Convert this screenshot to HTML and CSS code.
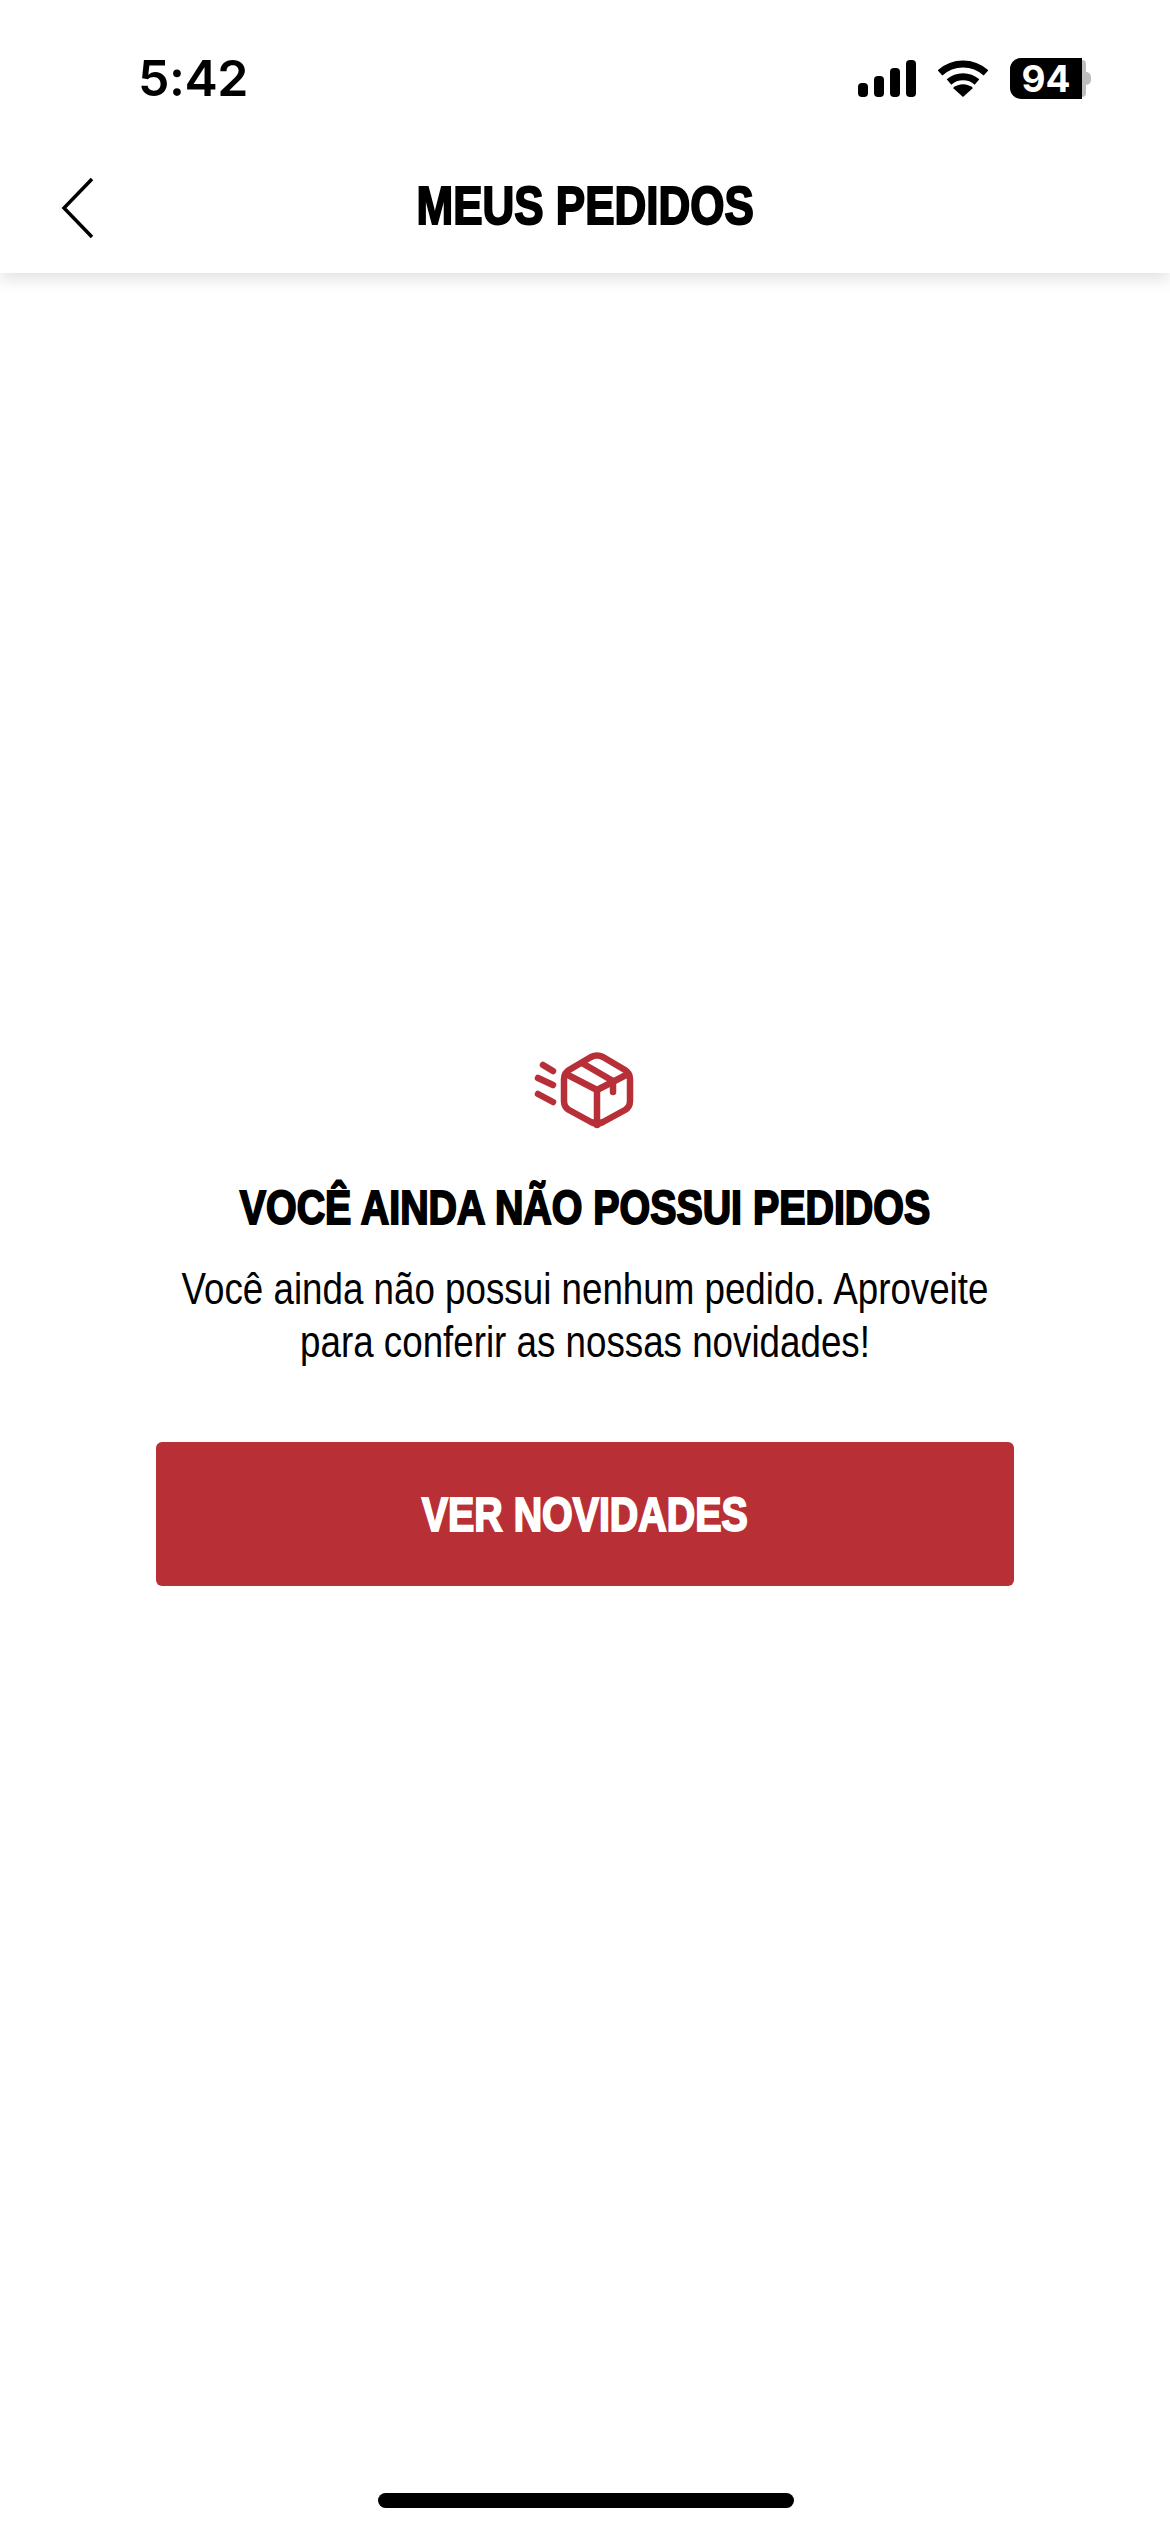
FILE: index.html
```html
<!DOCTYPE html>
<html lang="pt-BR">

<head>
    <meta charset="utf-8">
    <meta name="viewport" content="width=device-width, initial-scale=1.0">
    <title>Meus Pedidos</title>
    <link rel="stylesheet" href="styles.css">
</head>

<body>

    <header>
        <div class="statusbar">
            <span class="hora">5:42</span>
            <div class="statusicones">
                <svg class="sinal" width="58" height="37" viewBox="0 0 58 37">
                    <rect x="0" y="23" width="10" height="14" rx="4"></rect>
                    <rect x="16" y="16" width="10" height="21" rx="4"></rect>
                    <rect x="32" y="8" width="10" height="29" rx="4"></rect>
                    <rect x="48" y="0" width="10" height="37" rx="4"></rect>
                </svg>
                <svg class="wifi" width="50" height="37" viewBox="0 0 50 37">
                    <path d="M2 13 C15 1 35 1 48 13"></path>
                    <path d="M11 22 C19 15 31 15 39 22"></path>
                    <path class="wifiponta" d="M25 37 L15 28 C21 23 29 23 35 28 Z"></path>
                </svg>
                <div class="bateria">
                    <span class="nivel">94</span>
                    <span class="resto"></span>
                    <span class="ponta"></span>
                </div>
            </div>
        </div>
        <div class="topo">
            <button class="voltar" aria-label="Voltar">
                <svg width="34" height="62" viewBox="0 0 34 62">
                    <path d="M31 2 L3 31 L31 60"></path>
                </svg>
            </button>
            <h1>MEUS PEDIDOS</h1>
        </div>
    </header>

    <main>
        <svg class="caixa" width="110" height="90" viewBox="29 20 110 90">
            <path d="M42 37 L52 43"></path>
            <path d="M37 50 L52 57"></path>
            <path d="M37 66 L52 74"></path>
            <path d="M90 29 Q96 26 102 29 L124 42 Q129 45 129 51 L129 73 Q129 79 124 82 L102 94 Q96 97 90 94 L68 82 Q63 79 63 73 L63 51 Q63 45 68 42 Z"></path>
            <path d="M65 46 L96 62 L127 46"></path>
            <path d="M96 62 V97"></path>
            <path d="M81 35 L112 53 V64"></path>
        </svg>
        <h2>VOCÊ AINDA NÃO POSSUI PEDIDOS</h2>
        <p>Você ainda não possui nenhum pedido. Aproveite para conferir as nossas novidades!</p>
        <a class="botao" href="#"><span>VER NOVIDADES</span></a>
    </main>

    <div class="homebar"></div>

</body>

</html>
```

FILE: styles.css
```css
* {
    box-sizing: border-box;
}

body {
    margin: 0;
    height: 2532px;
    background-color: #fff;
    color: #000;
    font-family: "Liberation Sans", sans-serif;
    display: flex;
    flex-direction: column;
    overflow: hidden;
}

header {
    height: 273px;
    background-color: #fff;
    box-shadow: 0 6px 16px rgba(0, 0, 0, 0.12);
}

.statusbar {
    display: flex;
    justify-content: space-between;
    align-items: center;
    height: 76px;
    margin-top: 40px;
    padding: 0 79px 0 138px;
}

.hora {
    font-family: Inter, sans-serif;
    font-size: 50px;
    font-weight: 600;
    letter-spacing: -0.5px;
    line-height: 76px;
}

.statusicones {
    display: flex;
    align-items: center;
    gap: 22px;
}

.sinal rect {
    fill: #000;
}

.wifi path {
    fill: none;
    stroke: #000;
    stroke-width: 7px;
}

.wifi .wifiponta {
    fill: #000;
    stroke: none;
}

.bateria {
    display: flex;
    align-items: center;
    height: 41px;
}

.nivel {
    width: 72px;
    height: 41px;
    background-color: #000;
    border-radius: 11px 0 0 11px;
    color: #fff;
    font-family: Inter, sans-serif;
    font-size: 37px;
    font-weight: 700;
    line-height: 41px;
    text-align: center;
}

.resto {
    width: 4px;
    height: 37px;
    background-color: #bdbdbd;
    border-radius: 0 8px 8px 0;
}

.ponta {
    width: 5px;
    height: 13px;
    background-color: #bdbdbd;
    border-radius: 0 6px 6px 0;
}

.topo {
    position: relative;
    display: flex;
    justify-content: center;
    align-items: center;
    height: 96px;
    margin-top: 41px;
}

.voltar {
    position: absolute;
    left: 61px;
    top: 20px;
    padding: 0;
    border: 0;
    background: none;
    line-height: 0;
}

.voltar path {
    fill: none;
    stroke: #000;
    stroke-width: 3.5px;
}

/* no condensed family here, so the headings get squeezed */
h1 {
    margin: 0;
    font-size: 53px;
    font-weight: 700;
    transform: scaleX(0.83);
    -webkit-text-stroke: 2px #000;
}

main {
    flex: 1;
    display: flex;
    flex-direction: column;
    align-items: center;
    padding-top: 775px;
}

.caixa {
    display: block;
}

.caixa path {
    fill: none;
    stroke: #b83037;
    stroke-width: 6.5px;
    stroke-linecap: round;
    stroke-linejoin: round;
}

h2 {
    margin: 42px 0 0;
    font-size: 48px;
    font-weight: 700;
    line-height: 56px;
    white-space: nowrap;
    transform: scaleX(0.82);
    -webkit-text-stroke: 2px #000;
}

p {
    width: 1000px;
    margin: 26px 0 0;
    font-size: 44px;
    line-height: 53px;
    text-align: center;
    transform: scaleX(0.835);
}

.botao {
    display: flex;
    justify-content: center;
    align-items: center;
    width: 858px;
    height: 144px;
    margin-top: 74px;
    background-color: #b83036;
    border-radius: 6px;
    color: #fff;
    font-size: 48px;
    font-weight: 700;
    text-decoration: none;
}

.botao span {
    transform: scaleX(0.82);
    -webkit-text-stroke: 2px #fff;
}

.homebar {
    position: absolute;
    left: 378px;
    top: 2493px;
    width: 416px;
    height: 15px;
    background-color: #000;
    border-radius: 8px;
}
```
